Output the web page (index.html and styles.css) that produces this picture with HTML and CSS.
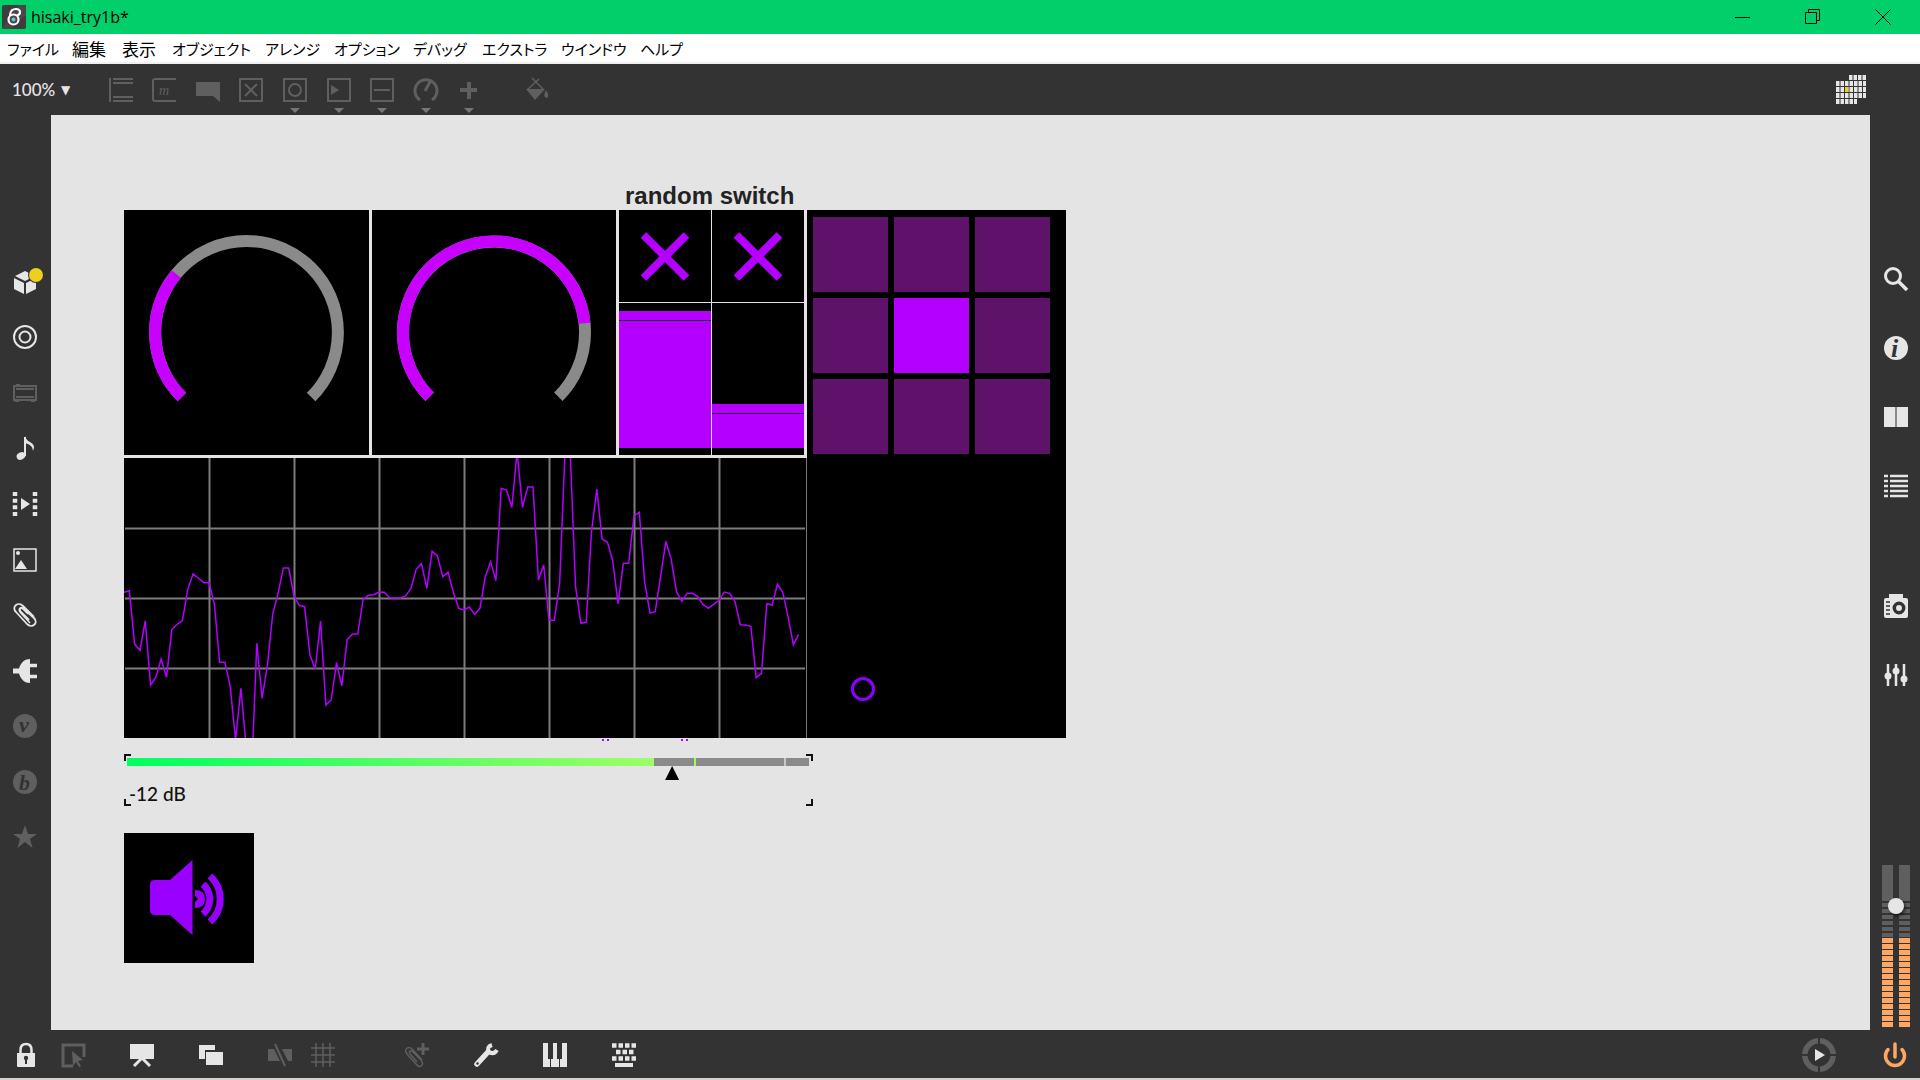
FILE: index.html
```html
<!DOCTYPE html>
<html lang="ja">
<head>
<meta charset="UTF-8">
<meta name="viewport" content="width=device-width, initial-scale=1.0">
<title>hisaki_try1b*</title>
<link rel="stylesheet" href="styles.css">
</head>
<body>

<header class="titlebar">
  <svg class="app-icon" width="24" height="24" viewBox="0 0 24 24"><rect width="24" height="24" rx="2" fill="#3d3d3d"/><path d="M0 24L16 0h8v10L8 24z" fill="#4b4648"/><g fill="none" stroke="#fff" stroke-width="2.2"><circle cx="11.500" cy="14.500" r="5"/><path d="M8 11C8 5 11 4 14 4q4 0 4 3.500 0 2-3 3"/></g><circle cx="11.500" cy="14.500" r="2" fill="#56c5e8"/></svg>
  <span class="title">hisaki_try1b*</span>
  <div class="window-buttons">
    <button aria-label="Minimize"><svg width="16" height="16" viewBox="0 0 16 16"><path d="M0 8.500h15" stroke="#000"/></svg></button>
    <button aria-label="Restore"><svg width="16" height="16" viewBox="0 0 16 16"><path d="M.5 3.500h11v11H.5zM3.500 3.500v-3h11v11h-3" fill="none" stroke="#000"/></svg></button>
    <button aria-label="Close"><svg width="16" height="16" viewBox="0 0 16 16"><path d="M.5 .5l15 15M15.500 .5l-15 15" stroke="#000"/></svg></button>
  </div>
</header>

<nav class="menubar">
  <button class="file">ファイル</button>
  <button class="kanji">編集</button>
  <button class="kanji">表示</button>
  <button class="kana-6">オブジェクト</button>
  <button class="kana-4">アレンジ</button>
  <button class="kana-5">オプション</button>
  <button class="kana-4">デバッグ</button>
  <button class="kana-5">エクストラ</button>
  <button class="kana-5">ウインドウ</button>
  <button class="kana-3">ヘルプ</button>
</nav>

<div class="toolbar">
  <label class="zoom"><select aria-label="Zoom"><option>100%</option></select><span>▼</span></label>
  <div class="tools">
    <button aria-label="Object"><svg viewBox="0 0 24 24"><path d="M1 0v24M4 1h20M4 5h20M4 19h20M4 23h20"/></svg></button>
    <button aria-label="Message"><svg viewBox="0 0 24 24"><path d="M24 1H3Q1 1 1 3v18q0 2 2 2h21"/><text x="7" y="17">m</text></svg></button>
    <button aria-label="Comment"><svg viewBox="0 0 24 24"><path class="solid" d="M0 4h24v20l-7-6H0z"/></svg></button>
    <button aria-label="Toggle"><svg viewBox="0 0 24 24"><path d="M1 1h22v22H1zM6 6l12 12M18 6L6 18"/></svg></button>
    <button class="has-menu" aria-label="Button"><svg viewBox="0 0 24 24"><path d="M1 1h22v22H1z"/><circle cx="12" cy="12" r="6"/></svg></button>
    <button class="has-menu" aria-label="Playlist"><svg viewBox="0 0 24 24"><path d="M1 1h22v22H1z"/><path class="solid" d="M4 7l8 5-8 5z"/></svg></button>
    <button class="has-menu" aria-label="Slider"><svg viewBox="0 0 24 24"><path d="M1 1h22v22H1zM4 12h16"/></svg></button>
    <button class="has-menu" aria-label="Dial"><svg viewBox="0 0 24 24"><path d="M6 22A11 11 0 1 1 18 22M11 13l5-9" stroke-width="3"/></svg></button>
    <button class="has-menu" aria-label="Add"><svg viewBox="0 0 24 24"><path d="M12 4v17M3 12h17" stroke-width="4"/></svg></button>
  </div>
  <button class="paint" aria-label="Format"><svg viewBox="0 0 24 24"><path d="M7 0l12 12M14 1L2 12" stroke-width="1.500"/><path class="solid" d="M1 11h19l-10 11z"/><path class="solid" d="M21 12q4 6 1 8-5-1-1-8z"/></svg></button>
  <button class="calendar" aria-label="Grid"><svg width="30" height="30" viewBox="0 0 30 30">
    <path d="M13 2.500h17M0 8.500h30M0 14.500h30M0 20.500h30M0 26.500h21" stroke="#e6e6e6" stroke-width="5" stroke-dasharray="3.500 1"/>
    <path d="M9 12h3.500v5H9z" fill="#ecd01e" stroke="none"/>
  </svg></button>
</div>

<main class="workspace">
  <nav class="side left">
    <button aria-label="Packages"><svg viewBox="0 0 24 24"><path class="solid" d="M1 8l10 5v11L1 19zM23 8l-10 5v11l10-5zM2 6l10-5 10 5-10 5z"/><circle cx="23" cy="5" r="8" fill="#333" stroke="none"/><circle cx="23" cy="5" r="7" fill="#ecd01e" stroke="none"/></svg></button>
    <button aria-label="Objects"><svg viewBox="0 0 24 24"><circle cx="12" cy="12" r="11"/><circle cx="12" cy="12" r="5.500"/></svg></button>
    <button class="dim" aria-label="Devices"><svg viewBox="0 0 24 24"><path d="M1 5h22v14H1zM3 8h18M3 16h18M3 4h4M2 20h4M18 20h4"/></svg></button>
    <button aria-label="Audio"><svg viewBox="0 0 24 24"><ellipse class="solid" cx="8" cy="20" rx="4.500" ry="3.500" transform="rotate(-25 8 20)"/><path d="M12 20V1"/><path class="solid" d="M12 0q1 4 5 6 6 3 3 9 0-6-8-8z"/></svg></button>
    <button aria-label="Video"><svg viewBox="0 0 24 24"><path d="M2 0v24M22 0v24" stroke-width="4.500" stroke-dasharray="4 2.670"/><path class="solid" d="M8 6l9 6-9 6z"/></svg></button>
    <button aria-label="Images"><svg viewBox="0 0 24 24"><path d="M1 1h22v22H1z" stroke-width="1.500"/><circle class="solid" cx="5" cy="5" r="2"/><path class="solid" d="M2 21l6-9 6 9z"/></svg></button>
    <button aria-label="Attachments"><svg viewBox="0 0 24 24"><path d="M21 14L10 3C5-2-2 4 3 9l11 12c5 5 12-1 7-6L11 6C8 3 5 6 8 9l8 8" stroke-width="1.800"/><path d="M17 20L7 9C5 6 8 4 10 6l5 5" stroke-width="1.500"/></svg></button>
    <button aria-label="Plug-ins"><svg viewBox="0 0 24 24"><path class="solid" d="M0 9.500h6C8 3 12 0 17 0v24C12 24 8 21 6 14.500H0z"/><path d="M16 6.500h8M16 17.500h8" stroke-width="3.500"/></svg></button>
    <button class="dim" aria-label="Vizzie"><svg viewBox="0 0 24 24"><circle class="solid" cx="12" cy="12" r="12"/><text class="glyph" x="6" y="18">v</text></svg></button>
    <button class="dim" aria-label="Beap"><svg viewBox="0 0 24 24"><circle class="solid" cx="12" cy="12" r="12"/><text class="glyph" x="6" y="20">b</text></svg></button>
    <button class="dim" aria-label="Favorites"><svg viewBox="0 0 24 24"><path class="solid" d="M12 0l3 9h9l-7 5 2.500 9-7.500-6-7.500 6L7 14 0 9h9z"/></svg></button>
  </nav>

  <section class="canvas">
    <h2 class="comment">random switch</h2>
    <div class="panels">
      <div class="panel-left">
        <div class="controls">
          <svg class="dial" viewBox="0 0 245 245" role="img" aria-label="Dial 1">
            <path d="M57.900 187.100A91.400 91.400 0 1 1 187.100 187.100" stroke="#8a8a8a"/>
            <path d="M57.900 187.100A91.400 91.400 0 0 1 52.300 64" stroke="#c800ff"/>
          </svg>
          <svg class="dial" viewBox="0 0 245 245" role="img" aria-label="Dial 2">
            <path d="M57.900 187.100A91.400 91.400 0 1 1 187.100 187.100" stroke="#8a8a8a"/>
            <path d="M57.900 187.100A91.400 91.400 0 1 1 213.400 113.200" stroke="#c800ff"/>
          </svg>
          <div class="switches">
            <label class="toggle"><input type="checkbox" aria-label="Toggle 1" checked><svg viewBox="0 0 92 92"><path d="M24.500 25l43 43M67.500 25l-43 43"/></svg></label>
            <label class="toggle"><input type="checkbox" aria-label="Toggle 2" checked><svg viewBox="0 0 92 92"><path d="M24.500 25l43 43M67.500 25l-43 43"/></svg></label>
            <div class="vslider"><div class="fill high"></div><input type="range" aria-label="Level 1" value="93"></div>
            <div class="vslider"><div class="fill low"></div><input type="range" aria-label="Level 2" value="27"></div>
          </div>
        </div>
        <svg class="scope" viewBox="0 0 682 280" role="img" aria-label="Scope">
          <path class="grid" d="M85.500 0v280M170.500 0v280M255.500 0v280M340.500 0v280M425.500 0v280M510.500 0v280M595.500 0v280M1 70.500h680M1 140.500h680M1 210.500h680"/>
          <polyline id="trace" points=""/>
        </svg>
      </div>
      <div class="panel-right">
        <div class="matrix">
          <button aria-label="Cell 1"></button><button aria-label="Cell 2"></button><button aria-label="Cell 3"></button>
          <button aria-label="Cell 4"></button><button class="on" aria-label="Cell 5"></button><button aria-label="Cell 6"></button>
          <button aria-label="Cell 7"></button><button aria-label="Cell 8"></button><button aria-label="Cell 9"></button>
        </div>
        <div class="pad"><span class="puck"></span></div>
      </div>
    </div>
    <svg class="clip" width="683" height="16" viewBox="0 0 683 16"><path d="M478 2h2M483 2h2M557 2h2M562 2h2" stroke="#b300ff" stroke-width="2"/></svg>

    <div class="gain">
      <svg class="corners" viewBox="0 0 689 52"><path d="M1 7V1h6M682 1h6v6M1 45v6h6M682 51h6v-6"/></svg>
      <div class="level"><div class="level-on"></div><div class="peak"></div><div class="tick"></div></div>
      <input type="range" id="gain" min="-70" max="2" value="-12">
      <label for="gain">-12 dB</label>
    </div>

    <button class="speaker" aria-label="Audio on">
      <svg viewBox="0 0 130 130">
        <path d="M31 47h15l22.500-20v75L46 82H31q-5 0-5-5V52q0-5 5-5z" fill="#90f"/>
        <path d="M71 57q10 0 10 9t-10 9v-6l3-3-3-3z" fill="#90f"/>
        <path d="M79 51A20 20 0 0 1 79 81M86 43A31 31 0 0 1 86 89" fill="none" stroke="#90f" stroke-width="7"/>
      </svg>
    </button>
  </section>

  <nav class="side right">
    <button aria-label="Search"><svg viewBox="0 0 24 24"><circle cx="9" cy="9" r="7.500" stroke-width="3"/><path d="M14 14l9 9" stroke-width="3.500"/></svg></button>
    <button aria-label="Inspector"><svg viewBox="0 0 24 24"><circle class="solid" cx="12" cy="12" r="12"/><text class="glyph info" x="7" y="21">i</text></svg></button>
    <button aria-label="Reference"><svg viewBox="0 0 24 24"><path class="solid" d="M0 2h11v20H0zM13 2h11v20H13z"/><path d="M12 2v20" stroke="#8a8a8a"/></svg></button>
    <button aria-label="Console"><svg viewBox="0 0 24 24"><path d="M0 2h4M0 7h4M0 12h4M0 17h4M0 22h4M6 2h18M6 7h18M6 12h18M6 17h18M6 22h18" stroke-width="2.500"/></svg></button>
    <button class="apart" aria-label="Snapshots"><svg viewBox="0 0 24 24"><path class="solid" d="M5 0h14v4h3q2 0 2 2v16q0 2-2 2H2q-2 0-2-2V6q0-2 2-2h3z"/><circle cx="15" cy="14" r="4.700" stroke="#333" stroke-width="3.500"/><path d="M2 8h4M2 12h4M2 16h4M2 20h4" stroke="#333" stroke-width="1.500"/></svg></button>
    <button aria-label="Mixer"><svg viewBox="0 0 24 24"><path d="M4 1v22M12 1v22M20 1v22" stroke-width="2.500"/><circle class="solid" cx="4" cy="13" r="3.500"/><circle class="solid" cx="12" cy="8" r="3.500"/><circle class="solid" cx="20" cy="16" r="3.500"/></svg></button>
    <div class="volume">
      <div class="bar"></div><div class="bar"></div>
      <span class="knob"></span>
      <input type="range" aria-label="Volume" value="75">
    </div>
  </nav>
</main>

<footer class="bottombar">
  <div class="cell lock"><button aria-label="Lock"><svg viewBox="0 0 24 24"><path class="solid" d="M3 10h18v13q0 1-1 1H4q-1 0-1-1z"/><path d="M6.500 11V7Q6.500 1 12 1t5.500 6v4" stroke-width="2.500"/><circle cx="12" cy="15" r="2.200" fill="#333" stroke="none"/><path d="M12 15v6" stroke="#333"/></svg></button></div>
  <div class="cell select dim"><button aria-label="Select"><svg viewBox="0 0 24 24"><path d="M12 23H2V2h21v12" stroke-width="3"/><path class="solid" d="M11 8l11 9-5 1 3 5-2 1-3-5-3 4z"/></svg></button></div>
  <div class="cell"><button aria-label="Presentation"><svg viewBox="0 0 24 24"><path class="solid" d="M0 1h24v15H0z"/><path d="M12 15L4 23M12 15l8 8" stroke-width="3"/></svg></button></div>
  <div class="cell"><button aria-label="Windows"><svg viewBox="0 0 24 24"><path class="solid" d="M0 2h16v5H6v9H0zM7 9h17v13H7z"/></svg></button></div>
  <div class="cell dim"><button aria-label="Patch cords"><svg viewBox="0 0 24 24"><path class="solid" d="M0 6h6l6 12H0zM14 6h10v12h-4z"/><path d="M7 1l10 22"/></svg></button></div>
  <div class="cell narrow dim"><button aria-label="Grid"><svg viewBox="0 0 24 24"><path d="M5 0v24M12 0v24M19 0v24M0 5h24M0 12h24M0 19h24" stroke-width="1.500"/></svg></button></div>
  <div class="cell add dim"><button aria-label="Add clip"><svg viewBox="0 0 24 24"><path d="M17 17L8 7C4 2-2 6 2 11l9 10c4 5 9 1 5-4L8 9C5 6 3 9 6 12l6 7" stroke-width="1.500"/><path d="M18 0v12M12 6h12" stroke-width="3"/></svg></button></div>
  <div class="cell"><button aria-label="Tools"><svg viewBox="0 0 24 24"><path d="M3 21L14 9" stroke-width="5.500" stroke-linecap="round"/><path d="M18 2q-6 2-3 7 5 3 8-2" stroke-width="4"/><circle cx="3.500" cy="20.500" r="1.200" fill="#333" stroke="none"/></svg></button></div>
  <div class="cell"><button aria-label="MIDI"><svg viewBox="0 0 24 24"><path class="solid" d="M0 0h5v16h2v8H0zM10 0h4v16h2v8H8v-8h2zM19 0h5v24h-7v-8h2z"/></svg></button></div>
  <div class="cell"><button aria-label="Keyboard"><svg viewBox="0 0 24 24"><path d="M0 2.500h24M4 9h18M0 15.500h24" stroke-width="4.500" stroke-dasharray="4.500 2"/><path d="M3 22h18" stroke-width="4"/></svg></button></div>
  <div class="cell transport"><button aria-label="Transport"><svg class="ring" viewBox="0 0 34 34"><circle cx="17" cy="17" r="14.200" stroke="#5f5f5f" stroke-width="5.500"/><path d="M17 0v7M17 27v7M0 17h7M27 17h7" stroke="#333"/><path class="solid" d="M13 11l10 6-10 6z"/></svg></button></div>
  <div class="cell power"><button aria-label="Audio power"><svg viewBox="0 0 24 24"><path d="M5 6.500A9.500 9.500 0 1 0 19 6.500M12 1v13" stroke-width="3.500" stroke-linecap="round"/></svg></button></div>
</footer>

<script src="script.js"></script>
</body>
</html>
```
FILE: styles.css
```css
* {
  box-sizing: border-box;
}
body {
  font-family: Lato, "Noto Sans CJK JP", sans-serif;
  margin: 0;
  height: 100vh;
  display: flex;
  flex-direction: column;
  background-color: #333;
  border-bottom: 2px solid #d2d1cf;
  overflow: hidden;
}
button {
  background: none;
  border: none;
  padding: 0;
  margin: 0;
  font: inherit;
  color: inherit;
  cursor: pointer;
}
svg {
  display: block;
  fill: none;
}

/* title bar and menus */
.titlebar {
  height: 34px;
  display: flex;
  align-items: center;
  background-color: #00cf6a;
  font: 16px "Open Sans", "Noto Sans", sans-serif;
}
.app-icon {
  margin: 0 5px 0 2px;
}
.window-buttons {
  margin-left: auto;
  margin-right: 2px;
  display: flex;
}
.window-buttons button {
  width: 70px;
  height: 34px;
  display: flex;
  align-items: center;
  justify-content: center;
}
.menubar {
  height: 30px;
  display: flex;
  align-items: center;
  background-color: #fff;
  border-bottom: 2px solid #f0f0f0;
  padding-left: 7px;
  font: 15px "Noto Sans CJK JP", sans-serif;
  font-feature-settings: "palt";
}
.menubar button {
  text-align: left;
  white-space: nowrap;
}
.menubar .kanji {
  width: 50px;
  font-size: 17px;
}
.file { width: 65px; }
.kana-3 { width: 60px; }
.kana-4 { width: 69px; }
.kana-5 { width: 79px; }
.kana-6 { width: 93px; }

/* object toolbar */
.toolbar {
  height: 51px;
  display: flex;
  align-items: center;
  color: #5f5f5f;
}
.toolbar svg,
.side svg,
.bottombar svg {
  width: 24px;
  height: 24px;
  stroke: currentColor;
  stroke-width: 2;
  overflow: visible;
}
.side svg .solid,
.bottombar svg .solid,
.toolbar svg .solid {
  fill: currentColor;
  stroke: none;
}
.toolbar text {
  font: italic 14px "Liberation Serif", serif;
  fill: currentColor;
  stroke: none;
}
.zoom {
  width: 99px;
  padding-left: 12px;
  display: flex;
  align-items: center;
  color: #e6e6e6;
}
.zoom select {
  appearance: none;
  background: none;
  border: none;
  padding: 0;
  width: 49px;
  color: inherit;
  font: 500 17px Lato, sans-serif;
}
.zoom span {
  font: 12px "DejaVu Sans", sans-serif;
}
.tools {
  width: 392px;
  display: grid;
  grid-template-columns: repeat(9, 1fr);
  justify-items: center;
}
.has-menu {
  position: relative;
}
.has-menu::after {
  content: "";
  position: absolute;
  top: 30px;
  left: 7px;
  border: 5px solid transparent;
  border-top-color: #777;
  border-bottom: none;
}
.paint {
  margin-left: 34px;
}
.toolbar .calendar {
  margin-left: auto;
  margin-right: 54px;
}
.toolbar .calendar svg {
  width: 30px;
  height: 30px;
}

/* side bars */
.workspace {
  flex: 1;
  display: flex;
  min-height: 0;
}
.side {
  display: flex;
  flex-direction: column;
  color: #e6e6e6;
}
.side button {
  display: flex;
  align-items: center;
  justify-content: center;
}
.left {
  width: 51px;
  padding: 139px 1px 165px 0;
}
.left button {
  flex: 1;
}
.right {
  width: 50px;
  padding: 129px 0 3px 2px;
}
.right button {
  height: 69px;
}
.right .apart {
  margin-top: 51px;
}
.side .dim,
.bottombar .dim {
  color: #5f5f5f;
}
.glyph {
  font: italic bold 22px "Liberation Serif", serif;
  fill: #333;
  stroke: none;
}
.glyph.info {
  font-size: 26px;
}
.volume {
  position: relative;
  margin: auto 10px 0;
  height: 162px;
  display: flex;
  justify-content: space-between;
}
.bar {
  width: 11px;
  background:
    repeating-linear-gradient(#ffa665 0 5px, #333 5px 6px) 0 73px / 11px 89px no-repeat,
    repeating-linear-gradient(#333 0 2px, #5f5f5f 2px 6px) 0 36px / 11px 37px no-repeat,
    #5f5f5f;
}
.volume .knob {
  position: absolute;
  left: 6px;
  top: 33px;
  width: 16px;
  height: 16px;
  border-radius: 50%;
  background-color: #e6e6e6;
  box-shadow: 2px 2px 3px rgba(0, 0, 0, 0.5);
}
.volume input,
.vslider input,
.toggle input {
  position: absolute;
  inset: 0;
  width: 100%;
  height: 100%;
  margin: 0;
  opacity: 0;
}
.volume input,
.vslider input {
  writing-mode: vertical-lr;
  direction: rtl;
}

/* patcher canvas */
.canvas {
  flex: 1;
  background-color: #e4e4e4;
  padding: 66px 0 0 73px;
}
.comment {
  margin: 0 0 0 501px;
  font: bold 24px/29px "Liberation Sans", sans-serif;
  color: #222;
}
.panels {
  display: flex;
}
.panel-left {
  width: 683px;
}
.controls {
  display: grid;
  grid-template-columns: 245px 244px 185px;
  gap: 3px;
  height: 245px;
  margin-bottom: 3px;
}
.dial {
  width: 100%;
  height: 245px;
  background-color: #000;
  stroke-width: 12;
}
.switches {
  display: grid;
  grid-template-columns: 1fr 1fr;
  grid-template-rows: 92px 1fr;
  gap: 1px;
}
.toggle,
.vslider {
  position: relative;
  background-color: #000;
}
.toggle svg {
  stroke: #b300ff;
  stroke-width: 8;
}
.vslider {
  display: flex;
  align-items: flex-end;
  padding-bottom: 7px;
}
.fill {
  width: 100%;
  background-color: #b300ff;
  border-top: 9px solid #b300ff;
  box-shadow: inset 0 1px #2d0040;
}
.fill.high {
  height: 137px;
}
.fill.low {
  height: 44px;
}
.scope {
  width: 683px;
  height: 280px;
  background-color: #000;
  border-right: 1px solid #777;
}
.scope .grid {
  stroke: #7c7c7c;
  stroke-width: 2;
}
.scope polyline {
  stroke: #b300ff;
  stroke-width: 1.5;
}
.panel-right {
  width: 259px;
  background-color: #000;
  padding: 7px 6px;
}
.matrix {
  display: grid;
  grid-template-columns: repeat(3, 75px);
  grid-auto-rows: 75px;
  gap: 6px;
}
.matrix button {
  background-color: #5e126a;
}
.matrix .on {
  background-color: #b300ff;
}
.pad {
  position: relative;
  height: 277px;
}
.puck {
  position: absolute;
  left: 38px;
  top: 223px;
  width: 24px;
  height: 24px;
  border: 3px solid #8c00ff;
  border-radius: 50%;
}

/* gain slider */
.gain {
  position: relative;
  width: 689px;
  height: 52px;
  padding: 4px 4px 0 3px;
}
.corners {
  position: absolute;
  inset: 0;
  stroke: #111;
  stroke-width: 2;
}
.level {
  position: relative;
  height: 8px;
  background-color: #8a8a8a;
}
.level-on {
  width: 527px;
  height: 8px;
  background: linear-gradient(to right, #00ff5f, #9dff66);
}
.peak,
.tick {
  position: absolute;
  top: 0;
  left: 567px;
  width: 2px;
  height: 8px;
  background-color: #9dff50;
}
.tick {
  left: 657px;
  background-color: #c8c8c8;
}
.gain input {
  appearance: none;
  display: block;
  width: 100%;
  height: 14px;
  margin: 0;
  background: none;
}
.gain input::-webkit-slider-thumb {
  appearance: none;
  width: 14px;
  height: 14px;
  background-color: #000;
  clip-path: polygon(50% 0, 100% 100%, 0 100%);
}
.gain label {
  display: block;
  padding-left: 2px;
  font-size: 19px;
  font-weight: 500;
  line-height: 28px;
  color: #111;
}
.speaker {
  display: block;
  width: 130px;
  height: 130px;
  margin-top: 27px;
  background-color: #000;
}

/* bottom bar */
.bottombar {
  height: 48px;
  padding-top: 2px;
  display: flex;
  align-items: center;
  color: #e6e6e6;
}
.cell {
  width: 69px;
  display: flex;
  justify-content: center;
}
.cell.lock {
  width: 51px;
}
.cell.select {
  width: 44px;
  margin-right: 12px;
}
.cell.narrow {
  width: 44px;
  margin-left: -13px;
}
.cell.add {
  margin-left: 37px;
}
.transport {
  margin-left: auto;
}
.cell.power {
  width: 50px;
  margin-left: 17px;
  color: #ffa665;
}
.bottombar .ring {
  width: 34px;
  height: 34px;
}
```
FILE: script.js
```javascript
// 128 scope samples, three units to a pixel
var samples = [
  427, 422, 583, 601, 513, 705, 682, 627, 682, 539, 523, 512, 418, 372, 384, 398,
  398, 460, 637, 637, 710, 870, 715, 890, 980, 580, 745, 645, 492, 430, 354, 354,
  438, 466, 470, 615, 657, 513, 765, 750, 638, 708, 569, 552, 552, 449, 436, 434,
  426, 427, 443, 444, 444, 438, 416, 358, 341, 415, 304, 318, 380, 367, 427, 475,
  480, 471, 493, 475, 381, 335, 392, 115, 120, 172, 5, 172, 111, 111, 390, 345,
  511, 511, 400, 10, 10, 410, 520, 517, 245, 117, 267, 277, 333, 461, 340, 340,
  198, 187, 395, 489, 485, 380, 274, 328, 425, 454, 430, 430, 440, 464, 475, 463,
  451, 426, 430, 454, 524, 525, 529, 683, 670, 461, 465, 403, 427, 500, 584, 553
];
var step = 680 / samples.length;

document.getElementById('trace').setAttribute('points', samples.map(function(value, i) {
  return (i * step) + ',' + ((value - 24) / 3);
}).join(' '));
```
